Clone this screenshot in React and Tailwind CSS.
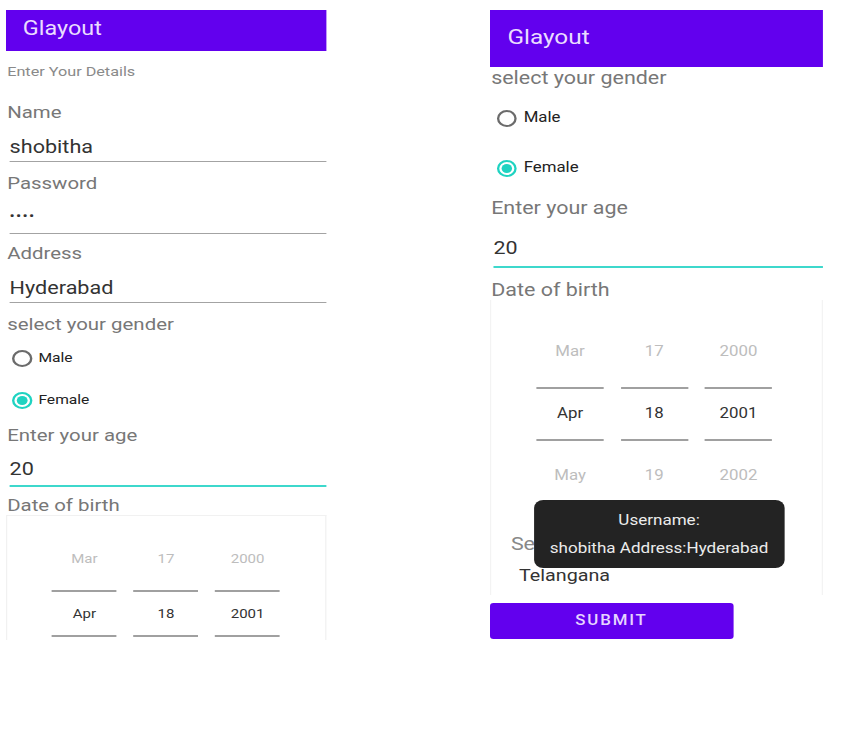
// Both phone captures are stretched sideways in the reference, so each screen is
// laid out at its own width and then scaled on x.
const LEFT_PICKER = [
  ["Mar", "Apr"],
  ["17", "18"],
  ["2000", "2001"],
];

const RIGHT_PICKER = [
  ["Mar", "Apr", "May"],
  ["17", "18", "19"],
  ["2000", "2001", "2002"],
];

function Radio({ checked }) {
  return (
    <span
      className={`h-[17px] w-[17px] shrink-0 rounded-full border-2 flex items-center justify-center ${checked ? "border-[#1fd3c1]" : "border-[#6b6b6b]"}`}
    >
      {checked && <span className="h-[9px] w-[9px] rounded-full bg-[#1fd3c1]" />}
    </span>
  );
}

function LeftScreen() {
  return (
    <div className="w-[266.67px] origin-top-left scale-x-[1.2] flex flex-col">
      <div className="h-[41px] bg-[#6200ee] flex items-center pl-[14px] pb-[4px] text-[19.5px] text-[#eadcff]">
        Glayout
      </div>
      <div className="mt-[10px] h-5 leading-5 pl-[1px] text-[13.5px] text-[#8a8a8a]">
        Enter Your Details
      </div>
      <div className="mt-[21px] h-5 leading-5 pl-[1px] text-[17px] text-[#777]">Name</div>
      <div className="mt-[15px] h-5 leading-5 pl-[3px] text-[18px] text-[#333]">shobitha</div>
      <div className="mt-[4px] ml-[3px] h-px bg-[#a3a3a3]" />
      <div className="mt-[11px] h-5 leading-5 pl-[1px] text-[17px] text-[#777]">Password</div>
      <div className="mt-[13px] h-5 leading-5 pl-[3px] text-[13px] tracking-[1px] text-[#333]">
        ••••
      </div>
      <div className="mt-[7px] ml-[3px] h-px bg-[#a3a3a3]" />
      <div className="mt-[9px] h-5 leading-5 pl-[1px] text-[17px] text-[#777]">Address</div>
      <div className="mt-[15px] h-5 leading-5 pl-[3px] text-[18px] text-[#333]">Hyderabad</div>
      <div className="mt-[4px] ml-[3px] h-px bg-[#a3a3a3]" />
      <div className="mt-[11px] h-5 leading-5 pl-[1px] text-[17px] text-[#777]">
        select your gender
      </div>
      <div className="mt-[14px] h-5 flex items-center gap-[5px] pl-[5px] text-[13px] text-[#222]">
        <Radio />
        Male
      </div>
      <div className="mt-[22px] h-5 flex items-center gap-[5px] pl-[5px] text-[13px] text-[#222]">
        <Radio checked />
        Female
      </div>
      <div className="mt-[15px] h-5 leading-5 pl-[1px] text-[17px] text-[#777]">
        Enter your age
      </div>
      <div className="mt-[14px] h-5 leading-5 pl-[3px] text-[18px] text-[#333]">20</div>
      <div className="mt-[6px] ml-[3px] h-[2px] bg-[#3ed8cc]" />
      <div className="mt-[8px] h-5 leading-5 pl-[1px] text-[17px] text-[#777]">Date of birth</div>
      <div className="h-[125px] border border-b-0 border-[#f1f1f1] flex justify-center gap-[14px] overflow-hidden">
        {LEFT_PICKER.map((c) => (
          <div className="w-[54px] flex flex-col items-center" key={c[0]}>
            <div className="mt-[33px] h-5 leading-5 text-[12.5px] text-[#bdbdbd]">{c[0]}</div>
            <div className="mt-[21px] h-[2px] w-full bg-[#a0a0a0]" />
            <div className="mt-[12px] h-5 leading-5 text-[12.5px] text-[#333]">{c[1]}</div>
            <div className="mt-[11px] h-[2px] w-full bg-[#a0a0a0]" />
          </div>
        ))}
      </div>
    </div>
  );
}

function RightScreen() {
  return (
    <div className="relative w-[287px] origin-top-left scale-x-[1.16] flex flex-col">
      <div className="h-[57px] bg-[#6200ee] flex items-center pl-[15px] pb-[2px] text-[21px] text-[#eadcff]">
        Glayout
      </div>
      <div className="mt-[1px] h-5 leading-5 pl-[1px] text-[18.5px] text-[#777]">
        select your gender
      </div>
      <div className="mt-[20px] h-5 flex items-center gap-[6px] pl-[6px] text-[14.5px] text-[#222]">
        <Radio />
        Male
      </div>
      <div className="mt-[30px] h-5 flex items-center gap-[6px] pl-[6px] text-[14.5px] text-[#222]">
        <Radio checked />
        Female
      </div>
      <div className="mt-[20px] h-5 leading-5 pl-[1px] text-[18.5px] text-[#777]">
        Enter your age
      </div>
      <div className="mt-[20px] h-5 leading-5 pl-[3px] text-[18.5px] text-[#333]">20</div>
      <div className="mt-[8px] ml-[3px] h-[2px] bg-[#3ed8cc]" />
      <div className="mt-[12px] h-5 leading-5 pl-[1px] text-[18.5px] text-[#777]">
        Date of birth
      </div>
      <div className="h-[295px] border-x border-[#f3f3f3] flex flex-col">
        <div className="flex gap-[14.6px] pl-[39px]">
          {RIGHT_PICKER.map((c) => (
            <div className="w-[58px] flex flex-col items-center" key={c[0]}>
              <div className="mt-[42px] h-5 leading-5 text-[14.5px] text-[#bdbdbd]">{c[0]}</div>
              <div className="mt-[25px] h-[2px] w-full bg-[#a0a0a0]" />
              <div className="mt-[15px] h-5 leading-5 text-[14.5px] text-[#333]">{c[1]}</div>
              <div className="mt-[15px] h-[2px] w-full bg-[#a0a0a0]" />
              <div className="mt-[25px] h-5 leading-5 text-[14.5px] text-[#bdbdbd]">{c[2]}</div>
            </div>
          ))}
        </div>
        <div className="mt-[48px] h-5 leading-5 pl-[17px] text-[18.5px] text-[#888]">Se</div>
        <div className="mt-[11px] h-5 leading-5 pl-[24px] text-[17px] text-[#333]">Telangana</div>
      </div>
      <button className="mt-[8px] h-[36px] w-[209.5px] rounded-[3px] bg-[#6200ee] text-[14.5px] font-medium tracking-[1.6px] text-[#e6d4ff]">
        SUBMIT
      </button>
      <div className="absolute left-[38px] top-[490px] w-[215.5px] h-[68px] rounded-[8px] bg-[#232323] flex flex-col items-center justify-center text-[14.7px] leading-[28px] text-[#ececec]">
        <span>Username:</span>
        <span>shobitha Address:Hyderabad</span>
      </div>
    </div>
  );
}

export default function App() {
  return (
    <div className="w-[846px] h-[730px] bg-white font-['Roboto','Noto_Sans',sans-serif] flex items-start pl-[6px] pt-[10px]">
      <div className="w-[320px] shrink-0">
        <LeftScreen />
      </div>
      <div className="ml-[164px] w-[333px] shrink-0">
        <RightScreen />
      </div>
    </div>
  );
}
